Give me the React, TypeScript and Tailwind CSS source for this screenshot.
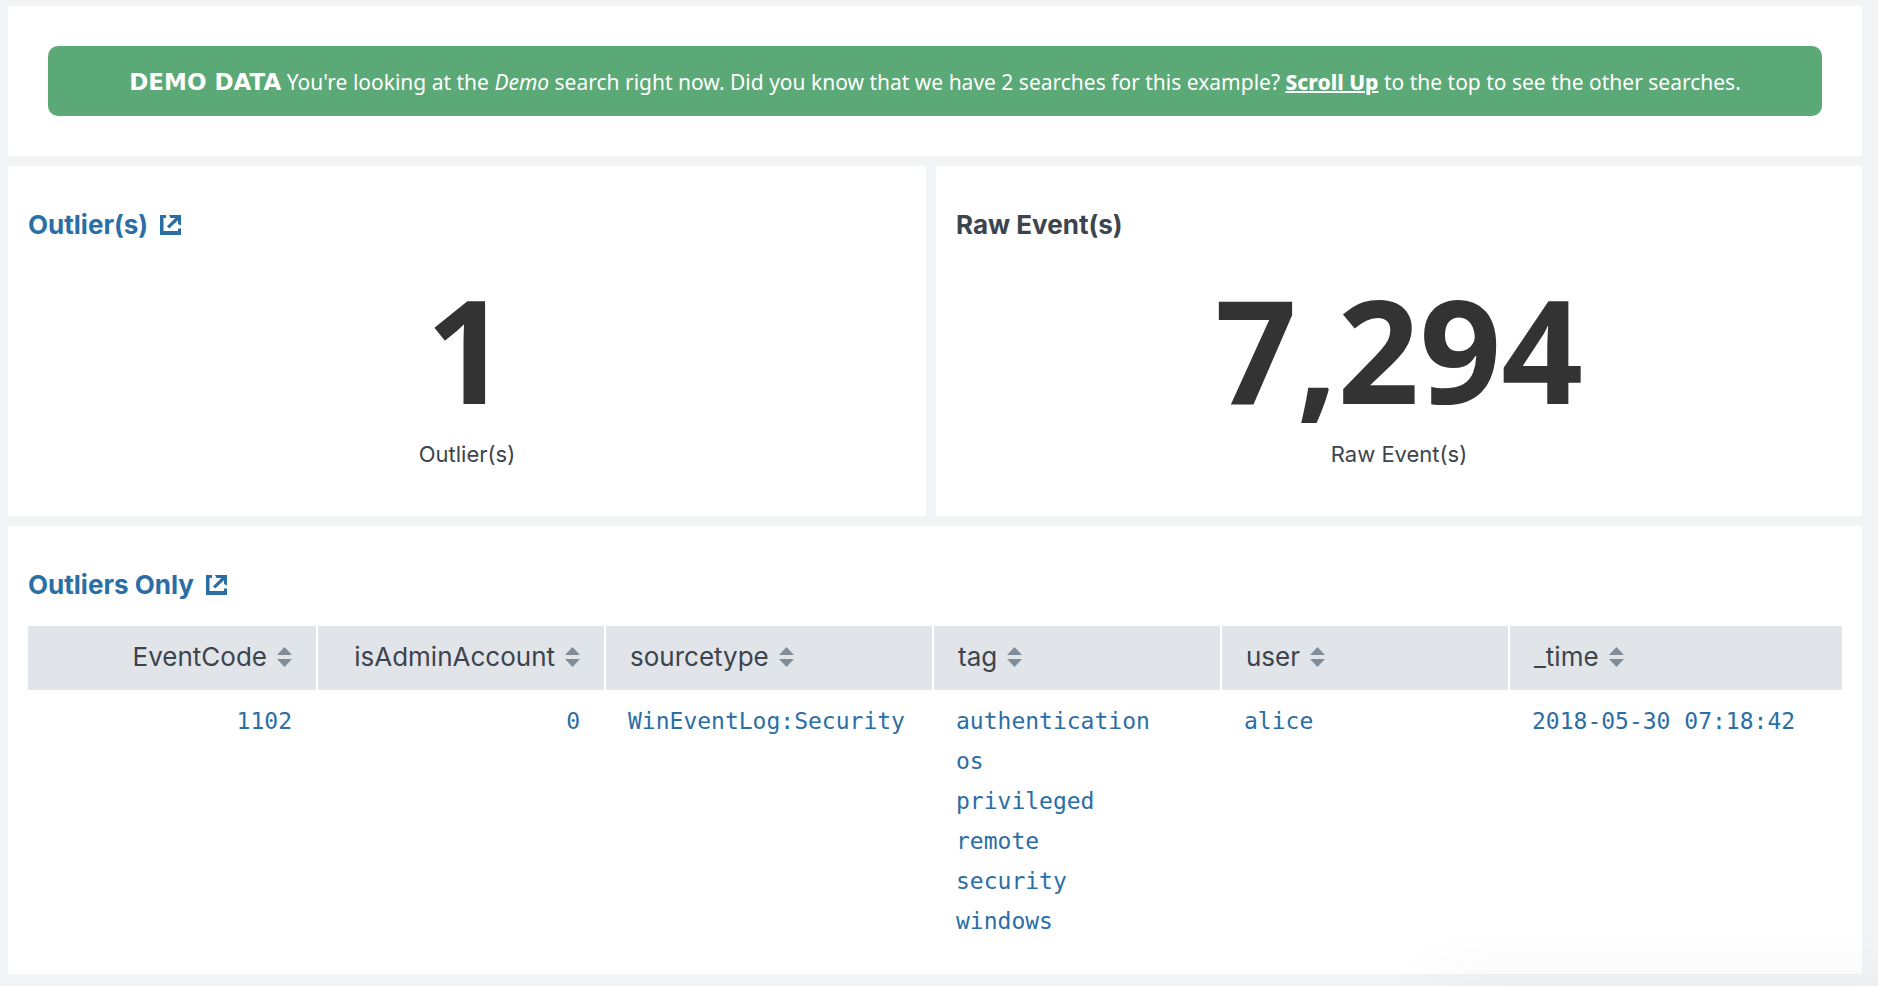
import type { ReactNode } from 'react';

const columns = [
  { name: 'EventCode', width: 'w-[290px]', numeric: true },
  { name: 'isAdminAccount', width: 'w-[288px]', numeric: true },
  { name: 'sourcetype', width: 'w-[328px]', numeric: false },
  { name: 'tag', width: 'w-[288px]', numeric: false },
  { name: 'user', width: 'w-[288px]', numeric: false },
  { name: '_time', width: 'w-auto', numeric: false },
];

const row: string[][] = [
  ['1102'],
  ['0'],
  ['WinEventLog:Security'],
  ['authentication', 'os', 'privileged', 'remote', 'security', 'windows'],
  ['alice'],
  ['2018-05-30 07:18:42'],
];

function ExternalIcon() {
  return (
    <svg aria-hidden="true" className="h-5 w-[21px]" viewBox="0 0 21 20" fill="currentColor">
      <path d="M0 0h6v3H3.5V16h14.5V13.5h3V20H0z" />
      <path d="M9 0H21v10.5L18 9V5.2L9.2 13.4 7 11.2 15.4 3H10.5z" />
    </svg>
  );
}

function SortIcon() {
  return (
    <svg aria-hidden="true" className="h-5 w-[15px] shrink-0" viewBox="0 0 15 20" fill="#818d99">
      <path d="M7.5 0 15 8H0z" />
      <path d="M7.5 20 15 12H0z" />
    </svg>
  );
}

function PanelTitle({ children, linked }: { children: ReactNode; linked?: boolean }) {
  return (
    <h2 className={`text-[26px] leading-8 font-bold ${linked ? 'text-[#2a6ea6]' : 'text-[#3c444d]'}`}>
      {linked ? (
        <a href="#search" className="inline-flex items-center gap-3">
          {children}
          <ExternalIcon />
        </a>
      ) : (
        children
      )}
    </h2>
  );
}

function Metric({ title, value, label, linked }: { title: string; value: string; label: string; linked?: boolean }) {
  return (
    <section className="bg-white px-5 pt-[43px] pb-[46px]">
      <PanelTitle linked={linked}>{title}</PanelTitle>
      <div className="pt-9 text-center">
        <div className="font-['Open_Sans',sans-serif] text-[143px] leading-[143px] font-bold text-[#333]">{value}</div>
        <div className="pt-[18px] text-[22px] leading-8 text-[#3c444d]">{label}</div>
      </div>
    </section>
  );
}

export default function App() {
  return (
    <main className="relative flex min-h-screen flex-col gap-[10px] overflow-hidden bg-[#f2f4f5] pt-[6px] pr-4 pb-3 pl-2 font-[Inter,sans-serif]">
      <section className="bg-white px-10 py-10">
        <p className="rounded-[10px] bg-[#5ba976] px-6 pt-[21px] pb-[19px] text-center font-['Noto_Sans',sans-serif] text-[21px] leading-[30px] text-white">
          <strong className="font-['DejaVu_Sans',sans-serif] text-[23px] leading-none">DEMO DATA</strong> You&apos;re
          looking at the <em>Demo</em> search right now. Did you know that we have 2 searches for this example?{' '}
          <a href="#top" className="font-extrabold underline decoration-2">
            Scroll Up
          </a>{' '}
          to the top to see the other searches.
        </p>
      </section>

      <div className="grid grid-cols-[918fr_926fr] gap-[10px]">
        <Metric title="Outlier(s)" value="1" label="Outlier(s)" linked />
        <Metric title="Raw Event(s)" value="7,294" label="Raw Event(s)" />
      </div>

      <section className="bg-white px-5 pt-[43px] pb-[33px]">
        <PanelTitle linked>Outliers Only</PanelTitle>
        <table className="mt-[25px] w-full table-fixed border-separate border-spacing-0">
          <thead>
            <tr className="h-16">
              {columns.map((c) => (
                <th
                  key={c.name}
                  scope="col"
                  className={`${c.width} border-r-2 border-white bg-[#e1e4e9] px-6 pt-0 pb-[2px] font-normal last:border-r-0 ${c.numeric ? 'text-right' : 'text-left'}`}
                >
                  <button
                    type="button"
                    className="inline-flex items-center gap-[10px] align-middle text-[26px] leading-8 text-[#3c444d]"
                  >
                    {c.name}
                    <SortIcon />
                  </button>
                </th>
              ))}
            </tr>
          </thead>
          <tbody>
            <tr>
              {row.map((values, i) => (
                <td
                  key={columns[i].name}
                  className={`pt-[11px] pb-0 align-top font-['DejaVu_Sans_Mono',monospace] text-[23px] leading-10 text-[#2a6ea6] ${columns[i].numeric ? 'px-[26px] text-right' : 'px-[22px] text-left'}`}
                >
                  {values.map((v) => (
                    <a key={v} href="#drilldown" className="block whitespace-nowrap">
                      {v}
                    </a>
                  ))}
                </td>
              ))}
            </tr>
          </tbody>
        </table>
      </section>

      <div
        aria-hidden="true"
        className="pointer-events-none absolute top-full right-0 h-20 w-[480px] translate-x-10 shadow-[0_0_70px_10px_rgba(0,0,0,0.04)]"
      />
    </main>
  );
}
